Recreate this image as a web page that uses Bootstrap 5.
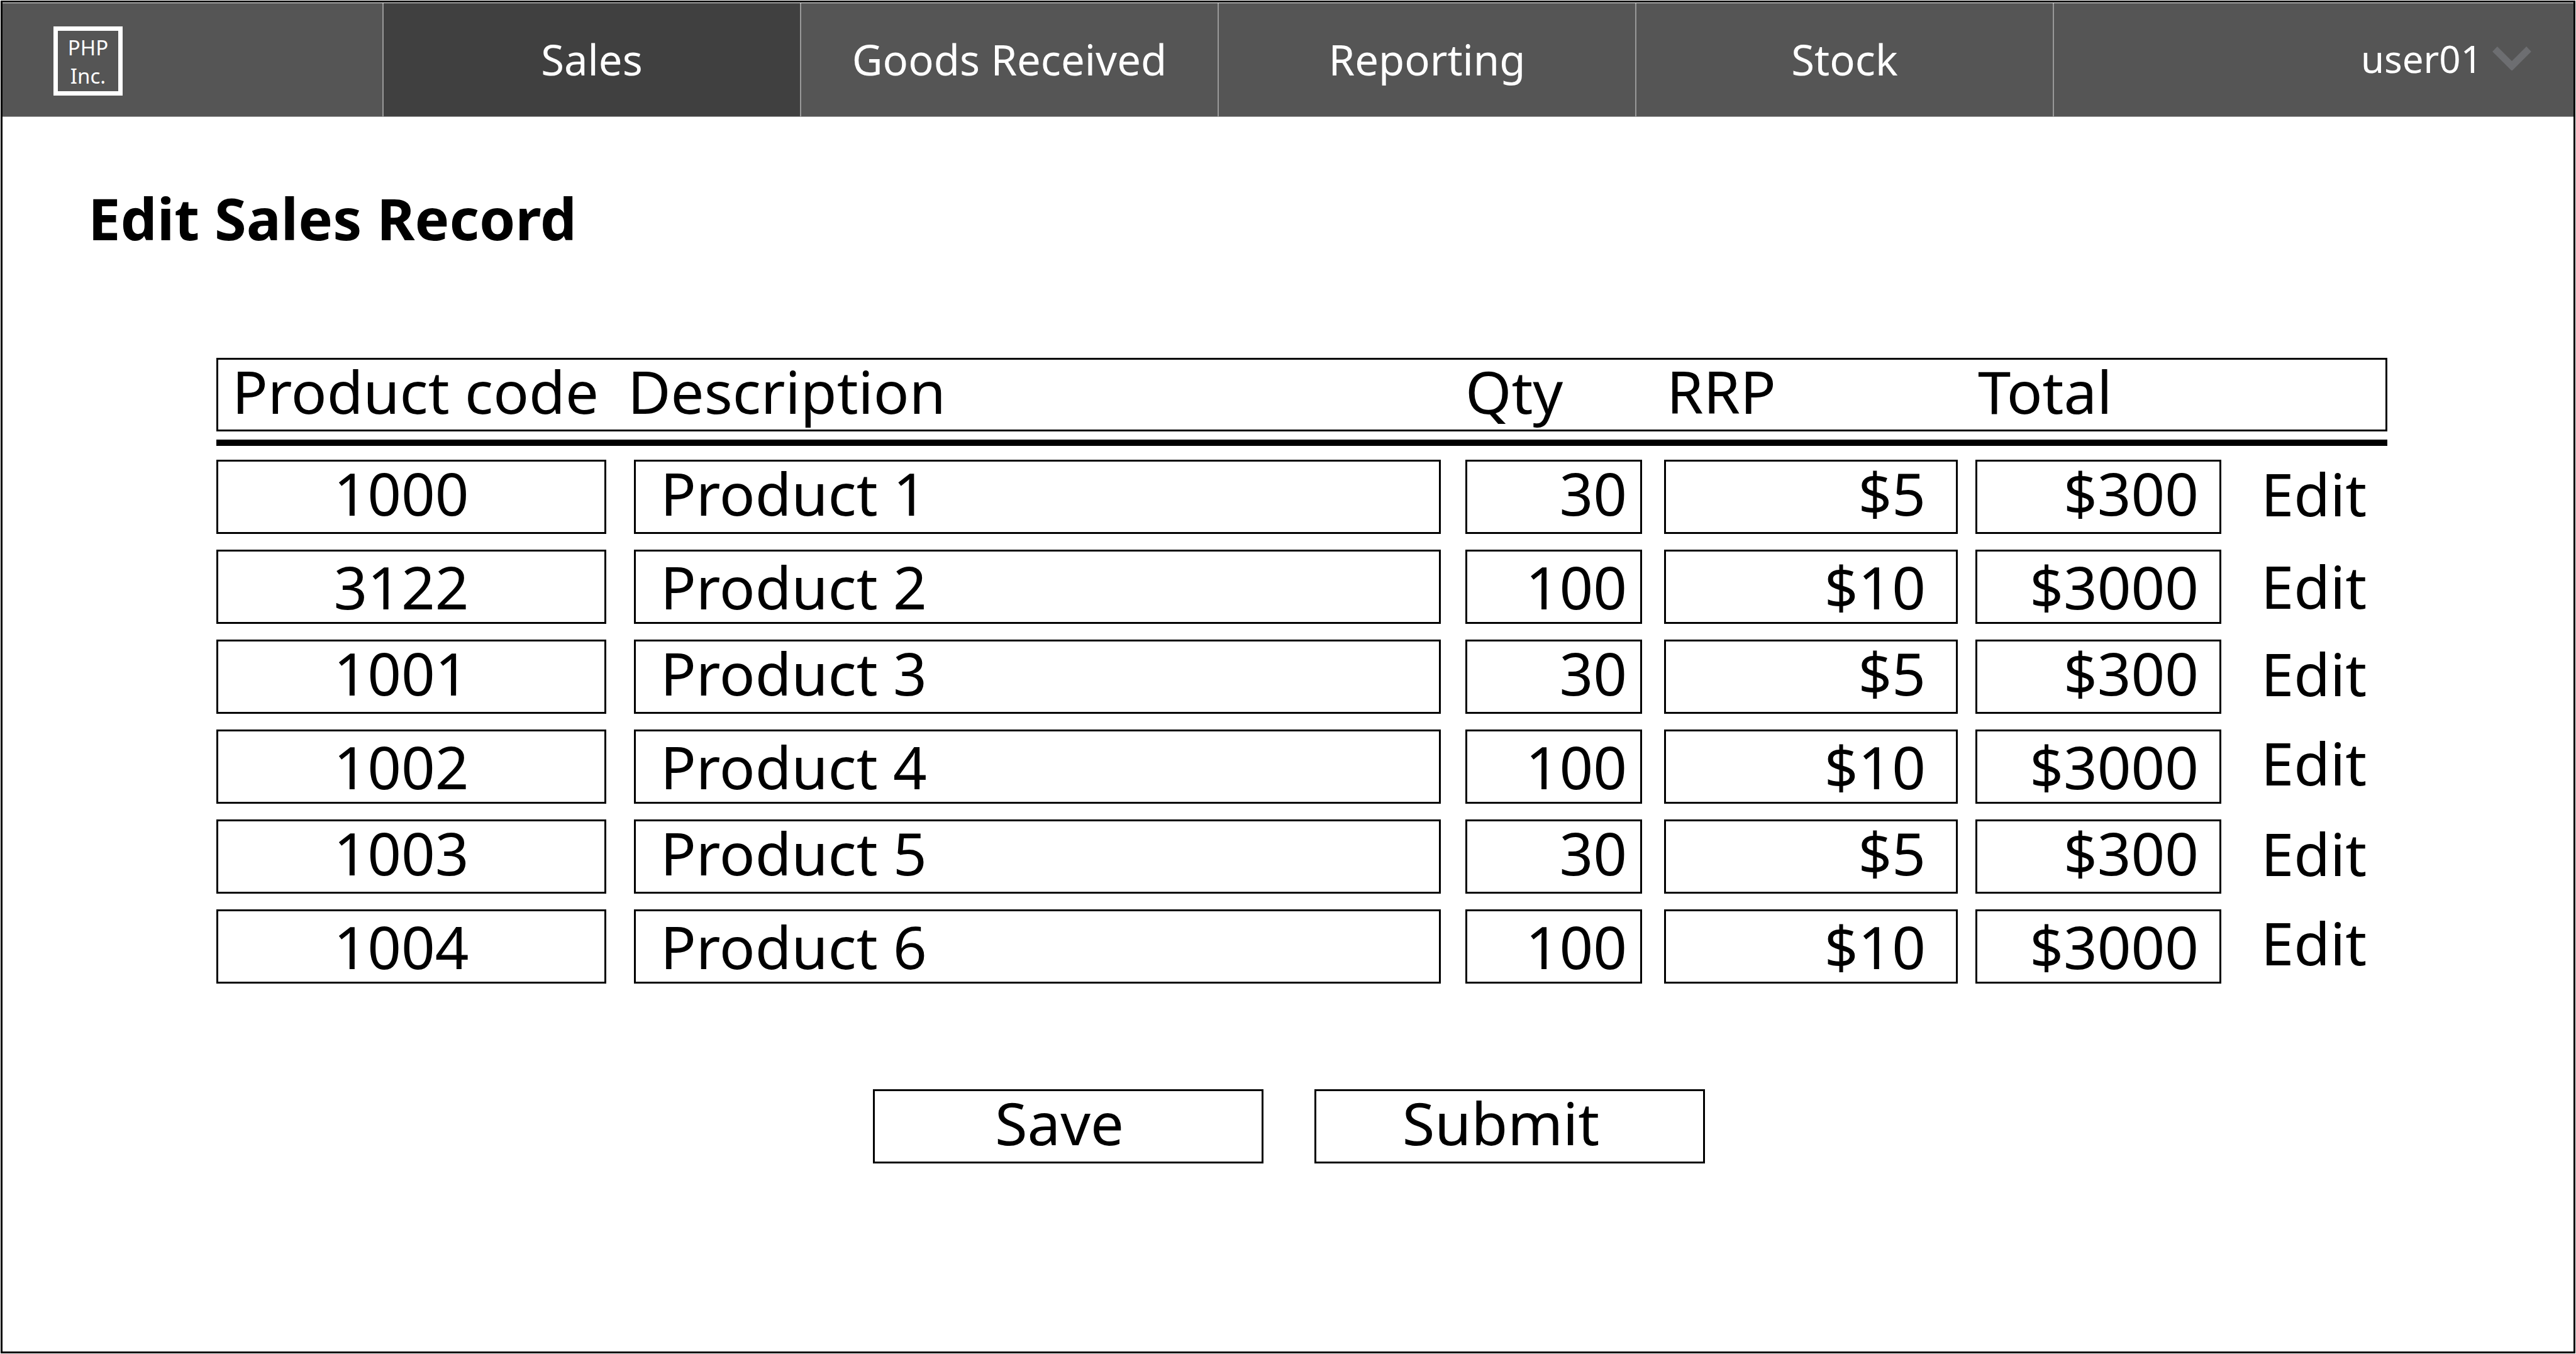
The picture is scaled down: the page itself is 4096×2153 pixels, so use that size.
<!DOCTYPE html>
<html lang="en">
<head>
<meta charset="utf-8">
<meta name="viewport" content="width=device-width, initial-scale=1">
<title>Edit Sales Record</title>
<link rel="stylesheet" href="https://cdn.jsdelivr.net/npm/bootstrap@5.3.0/dist/css/bootstrap.min.css">
<style>
  html { background: #fff; }
  body { font-family: "Noto Sans", "Open Sans", sans-serif; color: #000; padding: 1px; background: #fff; }
  .app-frame { min-height: calc(100vh - 2px); border: 3px solid #000; }

  /* top bar */
  .topbar { background: #555; border-top: 1px solid #fff; border-bottom: 1px solid #a0a0a0; height: 182px; font-size: 67px; line-height: 80px; }
  .topbar a { color: #fff; text-decoration: none; }
  .brand-cell { width: 604px; padding: 4px 0 0 81px; }
  .brand-mark { width: 110px; height: 110px; border: 7px solid #fff; padding-top: 4px; font-size: 33px; line-height: 45px; text-align: center; }
  .tab-link { width: 664px; border-left: 2px solid #999; padding-bottom: 2px; }
  .tab-link.active { background: #404040; }
  .user-cell { border-left: 2px solid #999; padding: 0 67px 4px 0; font-size: 60px; gap: 16px; }
  .user-cell svg { width: 62px; height: 38px; }

  .page-title { font-size: 92px; line-height: 120px; font-weight: 700; margin: 101px 0 0 136px; }

  /* sales record */
  .record-form { margin: 162px 296px 0 340px; font-size: 94px; line-height: 111px; }
  .record-table { width: 100%; table-layout: fixed; border-collapse: separate; border-spacing: 0; }
  .col-code { width: 654px; }
  .col-qty { width: 316px; }
  .col-rrp { width: 495px; }
  .col-total { width: 454px; }
  .col-edit { width: 201px; }
  .record-table th { font-weight: 400; border: 0 solid #000; border-width: 3px 0; height: 117px; padding: 0 0 11px; line-height: 100px; white-space: nowrap; }
  .record-table th:first-child { border-left-width: 3px; padding-left: 22px; }
  .record-table th:last-child { border-right-width: 3px; }
  .record-table th.head-money { padding-left: 4px; }
  .rule-cell { padding: 13px 0 22px; }
  .rule-cell hr { margin: 0; border: 0; height: 10px; background: #000; opacity: 1; }
  .record-table tbody td { padding: 0 0 25px; vertical-align: top; }
  .record-table tbody td:nth-child(1) { padding-right: 34px; }
  .record-table tbody td:nth-child(2) { padding-left: 10px; padding-right: 39px; }
  .record-table tbody td:nth-child(3) { padding-right: 35px; }
  .record-table tbody td:nth-child(4) { padding-right: 28px; }
  .record-table tbody td:nth-child(5) { padding-right: 63px; }
  .box-field { display: block; width: 100%; height: 118px; border: 3px solid #000; border-radius: 0; background: #fff; color: #000; padding: 0 0 12px; }
  .field-code { text-align: center; padding-right: 32px; }
  .field-desc { padding-left: 39px; }
  .field-qty { text-align: right; padding-right: 21px; }
  .field-rrp { text-align: right; padding-right: 48px; }
  .field-total { text-align: right; padding-right: 33px; }
  .edit-link { display: block; height: 118px; line-height: 108px; color: #000; text-decoration: none; }
  tbody tr:nth-child(even) .box-field { padding-bottom: 0; }
  tbody tr:nth-child(even) .edit-link { line-height: 116px; }
  tbody tr:nth-child(even):nth-child(n+4) .edit-link { line-height: 106px; }

  .form-actions { gap: 81px; margin-top: 143px; padding-right: 41px; }
  .box-btn { width: 621px; height: 118px; border: 3px solid #000; border-radius: 0; background: #fff; color: #000; font-size: 94px; line-height: 100px; padding: 0 28px 12px 0; }
</style>
</head>
<body>
<div class="app-frame">
  <nav class="topbar d-flex" aria-label="Main">
    <div class="brand-cell d-flex align-items-center">
      <a href="#" class="brand-mark d-block">PHP<br>Inc.</a>
    </div>
    <a href="#" class="tab-link active d-flex align-items-center justify-content-center" aria-current="page">Sales</a>
    <a href="#" class="tab-link d-flex align-items-center justify-content-center">Goods Received</a>
    <a href="#" class="tab-link d-flex align-items-center justify-content-center">Reporting</a>
    <a href="#" class="tab-link d-flex align-items-center justify-content-center">Stock</a>
    <a href="#" class="user-cell d-flex align-items-center justify-content-end flex-grow-1">user01
      <svg viewBox="0 0 62 38" aria-hidden="true"><path d="M4 4 L31 31 L58 4" fill="none" stroke="#6d6e71" stroke-width="11"/></svg>
    </a>
  </nav>

  <main>
    <h1 class="page-title">Edit Sales Record</h1>

    <form class="record-form">
      <table class="record-table">
        <colgroup><col class="col-code"><col><col class="col-qty"><col class="col-rrp"><col class="col-total"><col class="col-edit"></colgroup>
        <thead>
          <tr>
            <th scope="col">Product code</th><th scope="col">Description</th><th scope="col">Qty</th>
            <th scope="col" class="head-money">RRP</th><th scope="col" class="head-money">Total</th><th></th>
          </tr>
          <tr><td colspan="6" class="rule-cell"><hr></td></tr>
        </thead>
        <tbody>
          <tr>
            <td><input class="box-field field-code" aria-label="Product code, row 1" value="1000"></td>
            <td><input class="box-field field-desc" aria-label="Description, row 1" value="Product 1"></td>
            <td><input class="box-field field-qty" aria-label="Qty, row 1" value="30"></td>
            <td><input class="box-field field-rrp" aria-label="RRP, row 1" value="$5"></td>
            <td><input class="box-field field-total" aria-label="Total, row 1" value="$300"></td>
            <td><a href="#" class="edit-link">Edit</a></td>
          </tr>
          <tr>
            <td><input class="box-field field-code" aria-label="Product code, row 2" value="3122"></td>
            <td><input class="box-field field-desc" aria-label="Description, row 2" value="Product 2"></td>
            <td><input class="box-field field-qty" aria-label="Qty, row 2" value="100"></td>
            <td><input class="box-field field-rrp" aria-label="RRP, row 2" value="$10"></td>
            <td><input class="box-field field-total" aria-label="Total, row 2" value="$3000"></td>
            <td><a href="#" class="edit-link">Edit</a></td>
          </tr>
          <tr>
            <td><input class="box-field field-code" aria-label="Product code, row 3" value="1001"></td>
            <td><input class="box-field field-desc" aria-label="Description, row 3" value="Product 3"></td>
            <td><input class="box-field field-qty" aria-label="Qty, row 3" value="30"></td>
            <td><input class="box-field field-rrp" aria-label="RRP, row 3" value="$5"></td>
            <td><input class="box-field field-total" aria-label="Total, row 3" value="$300"></td>
            <td><a href="#" class="edit-link">Edit</a></td>
          </tr>
          <tr>
            <td><input class="box-field field-code" aria-label="Product code, row 4" value="1002"></td>
            <td><input class="box-field field-desc" aria-label="Description, row 4" value="Product 4"></td>
            <td><input class="box-field field-qty" aria-label="Qty, row 4" value="100"></td>
            <td><input class="box-field field-rrp" aria-label="RRP, row 4" value="$10"></td>
            <td><input class="box-field field-total" aria-label="Total, row 4" value="$3000"></td>
            <td><a href="#" class="edit-link">Edit</a></td>
          </tr>
          <tr>
            <td><input class="box-field field-code" aria-label="Product code, row 5" value="1003"></td>
            <td><input class="box-field field-desc" aria-label="Description, row 5" value="Product 5"></td>
            <td><input class="box-field field-qty" aria-label="Qty, row 5" value="30"></td>
            <td><input class="box-field field-rrp" aria-label="RRP, row 5" value="$5"></td>
            <td><input class="box-field field-total" aria-label="Total, row 5" value="$300"></td>
            <td><a href="#" class="edit-link">Edit</a></td>
          </tr>
          <tr>
            <td><input class="box-field field-code" aria-label="Product code, row 6" value="1004"></td>
            <td><input class="box-field field-desc" aria-label="Description, row 6" value="Product 6"></td>
            <td><input class="box-field field-qty" aria-label="Qty, row 6" value="100"></td>
            <td><input class="box-field field-rrp" aria-label="RRP, row 6" value="$10"></td>
            <td><input class="box-field field-total" aria-label="Total, row 6" value="$3000"></td>
            <td><a href="#" class="edit-link">Edit</a></td>
          </tr>
        </tbody>
      </table>
      <div class="form-actions d-flex justify-content-center">
        <button type="button" class="box-btn">Save</button>
        <button type="submit" class="box-btn">Submit</button>
      </div>
    </form>
  </main>
</div>
<script src="https://cdn.jsdelivr.net/npm/bootstrap@5.3.0/dist/js/bootstrap.bundle.min.js"></script>
</body>
</html>
